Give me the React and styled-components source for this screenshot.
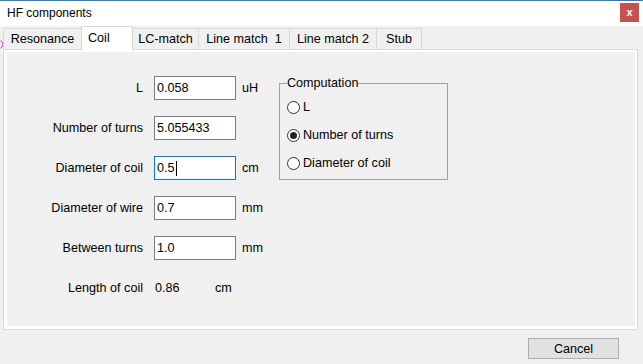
import React from 'react';
import styled, { createGlobalStyle } from 'styled-components';

const Global = createGlobalStyle`
  html, body { margin: 0; padding: 0; background: #f0f0f0; }
  body {
    width: 643px; height: 364px; overflow: hidden;
    font-family: 'Liberation Sans', Arial, sans-serif;
    font-size: 12.6px; color: #000;
  }
`;

const Window = styled.div`
  position: relative;
  width: 643px; height: 364px;
  display: flex; flex-direction: column;
  background: #f0f0f0;
`;

const TitleBar = styled.div`
  height: 25px; flex: none;
  border-top: 1px solid #1883d7;
  background: #fff;
  display: flex; align-items: flex-start; justify-content: space-between;
`;

const Title = styled.div`
  font-size: 12px; line-height: 25px; padding-left: 7px;
`;

const CloseButton = styled.div`
  width: 19px; height: 19px; margin: 2px 4px 0 0;
  background: #c75050; color: #fff;
  font-weight: bold; font-size: 11px; line-height: 1;
  display: flex; align-items: center; justify-content: center;
`;

const Body = styled.div`
  flex: 1; display: flex; flex-direction: column;
  padding: 0 5px 0 3px;
`;

const TabStrip = styled.div`
  height: 23px; flex: none;
  display: flex; align-items: flex-end;
`;

const Tab = styled.div`
  box-sizing: border-box;
  position: relative;
  width: ${p => p.$w}px;
  height: ${p => (p.$active ? 24 : 21)}px;
  margin-bottom: ${p => (p.$active ? -1 : 0)}px;
  margin-left: ${p => (p.$first ? 0 : -1)}px;
  z-index: ${p => (p.$active ? 2 : 1)};
  border: 1px solid #d9d9d9;
  border-bottom: none;
  background: ${p => (p.$active ? '#fff' : '#f0f0f0')};
  display: flex; align-items: center;
  justify-content: ${p => (p.$active ? 'flex-start' : 'center')};
  padding: ${p => (p.$active ? '0 0 2px 6px' : '0')};
  white-space: pre;
`;

const TabPanel = styled.div`
  box-sizing: border-box;
  height: 281px; flex: none;
  border: 1px solid #d9d9d9;
  background: #fff;
  padding: 2px 2px 3px 3px;
  display: flex;
`;

const Page = styled.div`
  flex: 1;
  background: #f0f0f0;
  display: flex; align-items: flex-start;
  padding-top: 24px;
`;

const Form = styled.div`
  width: 272px; flex: none;
  display: flex; flex-direction: column; gap: 16px;
`;

const Row = styled.div`
  display: flex; align-items: center; height: 24px;
`;

const Label = styled.div`
  width: 136px; flex: none; text-align: right;
`;

const TextBox = styled.div`
  box-sizing: border-box;
  width: 82px; height: 24px; flex: none;
  margin-left: 11px;
  border: 1px solid ${p => (p.$focused ? '#0078d7' : '#7a7a7a')};
  background: #fff;
  padding: 0 2px;
  display: flex; align-items: center;
`;

const Caret = styled.span`
  display: inline-block; width: 1px; height: 15px;
  background: #000; margin-left: 1px;
`;

const Value = styled.div`
  width: 60px; margin-left: 12px;
`;

const Unit = styled.div`
  margin-left: ${p => p.$gap}px;
`;

const GroupBox = styled.fieldset`
  box-sizing: border-box;
  width: 169px; min-width: 0;
  margin: 0;
  padding: 3px 7px 2px;
  border: 1px solid #a0a0a0;
`;

const Legend = styled.legend`
  padding: 0; line-height: 14px;
`;

const RadioRow = styled.div`
  height: 28px; display: flex; align-items: center;
`;

const RadioCircle = styled.span`
  box-sizing: border-box;
  width: 13px; height: 13px; flex: none;
  border: 1px solid #333;
  border-radius: 50%;
  background: #fff;
  display: flex; align-items: center; justify-content: center;
  &::after {
    content: '';
    display: ${p => (p.$checked ? 'block' : 'none')};
    width: 7px; height: 7px; border-radius: 50%;
    background: #222;
  }
`;

const RadioLabel = styled.span`
  margin-left: 3px;
`;

const Footer = styled.div`
  display: flex; justify-content: flex-end;
  padding: 8px 19px 0 0;
`;

const Button = styled.div`
  box-sizing: border-box;
  width: 91px; height: 21px;
  background: #e1e1e1;
  border: 1px solid #adadad;
  display: flex; align-items: center; justify-content: center;
`;

const Marker = styled.svg`
  position: absolute; left: 0; top: 40px;
`;

const tabs = [
  { label: 'Resonance', w: 79 },
  { label: 'Coil', w: 52, active: true },
  { label: 'LC-match', w: 67 },
  { label: 'Line match  1', w: 92 },
  { label: 'Line match 2', w: 88 },
  { label: 'Stub', w: 46 },
];

const fields = [
  { label: 'L', value: '0.058', unit: 'uH' },
  { label: 'Number of turns', value: '5.055433', unit: '' },
  { label: 'Diameter of coil', value: '0.5', unit: 'cm', focused: true },
  { label: 'Diameter of wire', value: '0.7', unit: 'mm' },
  { label: 'Between turns', value: '1.0', unit: 'mm' },
];

const options = [
  { label: 'L' },
  { label: 'Number of turns', checked: true },
  { label: 'Diameter of coil' },
];

export default function App() {
  return (
    <Window>
      <Global />
      <TitleBar>
        <Title>HF components</Title>
        <CloseButton>x</CloseButton>
      </TitleBar>
      <Body>
        <TabStrip>
          {tabs.map((t, i) => (
            <Tab key={t.label} $w={t.w} $active={t.active} $first={i === 0}>
              {t.label}
            </Tab>
          ))}
        </TabStrip>
        <TabPanel>
          <Page>
            <Form>
              {fields.map(f => (
                <Row key={f.label}>
                  <Label>{f.label}</Label>
                  <TextBox $focused={f.focused}>
                    {f.value}
                    {f.focused && <Caret />}
                  </TextBox>
                  <Unit $gap={6}>{f.unit}</Unit>
                </Row>
              ))}
              <Row>
                <Label>Length of coil</Label>
                <Value>0.86</Value>
                <Unit $gap={0}>cm</Unit>
              </Row>
            </Form>
            <GroupBox>
              <Legend>Computation</Legend>
              {options.map(o => (
                <RadioRow key={o.label}>
                  <RadioCircle $checked={o.checked} />
                  <RadioLabel>{o.label}</RadioLabel>
                </RadioRow>
              ))}
            </GroupBox>
          </Page>
        </TabPanel>
        <Footer>
          <Button>Cancel</Button>
        </Footer>
      </Body>
      <Marker width="4" height="9" viewBox="0 0 4 9">
        <path d="M0.5 0.8 A4 4 0 0 1 0.5 8.2" fill="none" stroke="#e020e0" strokeWidth="1" />
      </Marker>
    </Window>
  );
}
